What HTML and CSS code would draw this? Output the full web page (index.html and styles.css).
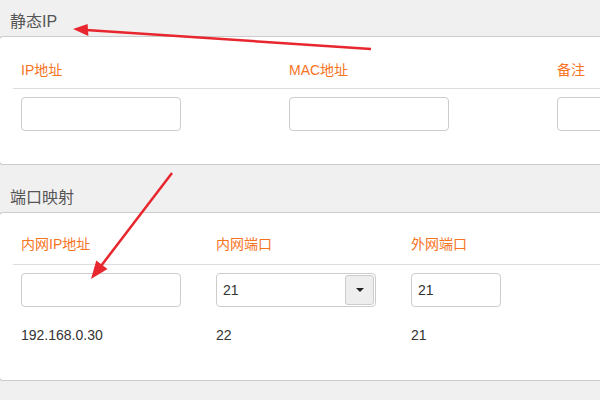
FILE: index.html
```html
<!DOCTYPE html>
<html lang="zh-CN">
<head>
    <meta charset="UTF-8">
    <title>静态IP / 端口映射</title>
    <link rel="stylesheet" href="styles.css">
</head>
<body>
    <div class="section">
        <div class="section-title">静态IP</div>
        <div class="panel">
            <div class="row head wide">
                <div class="cell">IP地址</div>
                <div class="cell">MAC地址</div>
                <div class="cell">备注</div>
            </div>
            <div class="row wide inputs">
                <div class="cell"><input class="text-input" type="text"></div>
                <div class="cell"><input class="text-input" type="text"></div>
                <div class="cell"><input class="text-input" type="text"></div>
            </div>
            <div class="panel-end"></div>
        </div>
    </div>

    <div class="section second">
        <div class="section-title">端口映射</div>
        <div class="panel">
            <div class="row head narrow">
                <div class="cell">内网IP地址</div>
                <div class="cell">内网端口</div>
                <div class="cell">外网端口</div>
            </div>
            <div class="row narrow inputs">
                <div class="cell"><input class="text-input" type="text"></div>
                <div class="cell">
                    <div class="select-box">
                        <span class="select-value">21</span>
                        <span class="select-btn"><span class="caret"></span></span>
                    </div>
                </div>
                <div class="cell"><input class="text-input short" type="text" value="21"></div>
            </div>
            <div class="row narrow values">
                <div class="cell">192.168.0.30</div>
                <div class="cell">22</div>
                <div class="cell">21</div>
            </div>
        </div>
    </div>

    <!-- annotation arrows -->
    <svg class="arrows" width="600" height="400" viewBox="0 0 600 400">
        <line x1="371" y1="49" x2="86" y2="30" stroke="#e8262d" stroke-width="2.5"/>
        <polygon points="73,29 87.6,24 88.4,36" fill="#e8262d"/>
        <line x1="172" y1="173" x2="101" y2="266" stroke="#e8262d" stroke-width="2.5"/>
        <polygon points="91,279 96.3,260.5 107.5,269" fill="#e8262d"/>
    </svg>
</body>
</html>
```

FILE: styles.css
```css
body {
    margin: 0;
    padding: 0;
    background-color: #f0f0f0;
    font-family: 'Liberation Sans', 'Noto Sans CJK SC', sans-serif;
    font-size: 14px;
    color: #333;
    width: 600px;
    height: 400px;
    overflow: hidden;
    position: relative;
}
.section.second {
    margin-top: 11px;
}
.section-title {
    height: 36px;
    padding: 10px 10px 0;
    box-sizing: border-box;
    line-height: 24px;
    font-size: 16px;
    color: #555;
}
.panel {
    background-color: #fff;
    border: 1px solid #ccc;
    border-right: none;
    border-radius: 4px 0 0 4px;
    margin-left: -1px;
    overflow: hidden;
}
.row {
    display: flex;
}
.row .cell {
    flex: none;
    padding-left: 8px;
    box-sizing: border-box;
}
.row.wide .cell {
    width: 268px;
}
.row.narrow .cell {
    width: 195px;
}
.row.head {
    margin-left: 13px;
    border-bottom: 1px solid #ddd;
    color: #f6741f;
    line-height: 20px;
    padding: 23px 0 8px;
}
.second .row.head {
    padding: 21px 0 10px;
}
.row.inputs {
    margin-left: 13px;
    padding-top: 8px;
}
.panel-end {
    height: 33px;
}
.text-input {
    width: 160px;
    height: 34px;
    box-sizing: border-box;
    border: 1px solid #ccc;
    border-radius: 4px;
    padding: 0 6px;
    font-family: inherit;
    font-size: 14px;
    color: #333;
    outline: none;
    display: block;
}
.text-input.short {
    width: 90px;
}
.select-box {
    width: 160px;
    height: 34px;
    box-sizing: border-box;
    border: 1px solid #ccc;
    border-radius: 4px;
    display: flex;
    align-items: center;
    justify-content: space-between;
    padding: 1px 1px 1px 6px;
}
.select-value {
    color: #333;
}
.select-btn {
    width: 29px;
    height: 30px;
    box-sizing: border-box;
    background-color: #eee;
    border: 1px solid #ccc;
    border-radius: 3px;
    display: flex;
    align-items: center;
    justify-content: center;
}
.caret {
    width: 0;
    height: 0;
    border-left: 4px solid transparent;
    border-right: 4px solid transparent;
    border-top: 4px solid #222;
}
.row.values {
    margin-left: 13px;
    padding: 18px 0 35px;
    line-height: 20px;
}
.arrows {
    position: absolute;
    top: 0;
    left: 0;
    pointer-events: none;
}
```
